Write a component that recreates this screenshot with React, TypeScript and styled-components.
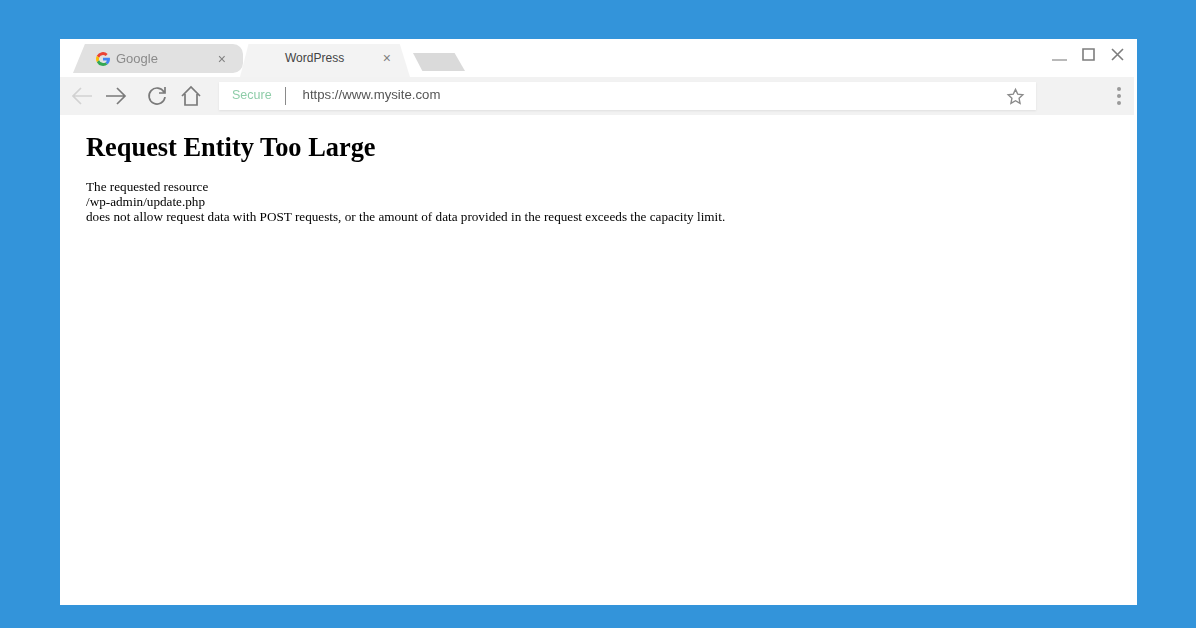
import React from "react";
import styled, { createGlobalStyle } from "styled-components";

const Global = createGlobalStyle`
    html, body {
        margin: 0;
        height: 100%;
    }
    #root {
        height: 100%;
    }
`;

const Page = styled.div`
    box-sizing: border-box;
    height: 628px;
    padding: 39px 59px 23px 60px;
    background-color: #3394da;
`;

const Window = styled.div`
    display: flex;
    flex-direction: column;
    height: 100%;
    background-color: #fff;
`;

const TabStrip = styled.div`
    display: flex;
    align-items: flex-end;
    justify-content: space-between;
    height: 38px;
    padding: 0 12px 0 13px;
    filter: blur(0.7px);
`;

const Tabs = styled.div`
    display: flex;
    align-items: flex-end;
`;

const Tab = styled.div<{ $active?: boolean }>`
    display: flex;
    align-items: center;
    box-sizing: border-box;
    width: 170px;
    height: ${p => (p.$active ? "33px" : "29px")};
    margin-right: -3px;
    margin-bottom: ${p => (p.$active ? "0" : "4px")};
    padding: ${p => (p.$active ? "0 19px 5px 45px" : "0 17px 0 23px")};
    font: ${p => (p.$active ? "12px" : "13px")} "Liberation Sans", sans-serif;
    color: ${p => (p.$active ? "#444" : "#8a8a8a")};
    background-color: ${p => (p.$active ? "#f3f3f3" : "#e1e1e1")};
    border-radius: ${p => (p.$active ? "0" : "0 10px 10px 0")};
    clip-path: ${p =>
        p.$active
            ? "polygon(0 100%, 5% 0, 94% 0, 100% 100%)"
            : "polygon(0 100%, 7% 0, 100% 0, 100% 100%)"};
    z-index: ${p => (p.$active ? 1 : 0)};
`;

const TabFavicon = styled.svg`
    width: 14px;
    height: 14px;
    margin-right: 6px;
    flex: none;
`;

const TabTitle = styled.span`
    flex: 1;
`;

const TabClose = styled.span`
    font-size: 14px;
    line-height: 1;
    color: #808080;
`;

const NewTab = styled.div`
    width: 52px;
    height: 18px;
    margin: 0 0 6px 6px;
    background-color: #dadada;
    clip-path: polygon(0 0, 80% 0, 100% 100%, 18% 100%);
`;

const WindowControls = styled.div`
    display: flex;
    align-items: center;
    gap: 14px;
    height: 100%;
    padding-bottom: 8px;
    box-sizing: border-box;
`;

const ControlIcon = styled.svg<{ $light?: boolean }>`
    width: 15px;
    height: 15px;
    fill: none;
    stroke: ${p => (p.$light ? "#a8a8a8" : "#7d7d7d")};
    stroke-width: 1.6;
`;

const Toolbar = styled.div`
    display: flex;
    align-items: center;
    height: 38px;
    margin-right: 3px;
    padding: 0 12px 0 10px;
    background-color: #f2f2f2;
    filter: blur(0.7px);
`;

const NavButton = styled.svg<{ $dim?: boolean; $gap: number }>`
    width: 24px;
    height: 24px;
    margin-right: ${p => p.$gap}px;
    flex: none;
    fill: none;
    stroke: ${p => (p.$dim ? "#d2d2d2" : "#7a7a7a")};
    stroke-width: 1.7;
`;

const AddressBar = styled.div`
    display: flex;
    align-items: center;
    flex: 1;
    height: 28px;
    margin: 0 80px 0 1px;
    padding: 0 11px 0 13px;
    background-color: #fff;
    font: 13.2px "Liberation Sans", sans-serif;
    box-shadow: 0 1px 2px rgba(0, 0, 0, 0.08);
`;

const Secure = styled.span`
    font-size: 12.5px;
    padding-bottom: 3px;
    color: #8fcda9;
`;

const Divider = styled.span`
    width: 1px;
    height: 18px;
    margin: 0 17px 0 13px;
    background-color: #8a8a8a;
`;

const Url = styled.span`
    flex: 1;
    padding-bottom: 3px;
    color: #555;
`;

const StarIcon = styled.svg`
    width: 19px;
    height: 19px;
    fill: none;
    stroke: #8a8a8a;
    stroke-width: 1.7;
`;

const MenuDots = styled.svg`
    width: 6px;
    height: 20px;
    flex: none;
    fill: #9a9a9a;
`;

const Content = styled.main`
    padding: 16px 26px;
    font-family: "Liberation Serif", "Times New Roman", serif;
    color: #000;
    filter: blur(0.5px);
`;

const Heading = styled.h1`
    margin: 0 0 16px;
    font-size: 26.4px;
    line-height: 32px;
    font-weight: 700;
`;

const Message = styled.p`
    margin: 0;
    font-size: 13.2px;
    line-height: 15px;
`;

export default function App() {
    return (
        <Page>
            <Global />
            <Window>
                <TabStrip>
                    <Tabs>
                        <Tab>
                            <TabFavicon viewBox="0 0 24 24">
                                <path fill="#ea4335" d="M12 5a7 7 0 0 1 4.6 1.7l3.4-3.4A12 12 0 0 0 1.3 6.6l4 3.1A7 7 0 0 1 12 5z" />
                                <path fill="#fbbc05" d="M5 12c0-.8.1-1.600.4-2.300l-4-3.100a12 12 0 0 0 0 10.800l4-3.100A7 7 0 0 1 5 12z" />
                                <path fill="#34a853" d="M12 19a7 7 0 0 1-6.600-4.700l-4 3.100A12 12 0 0 0 20 21l-3.800-3A7 7 0 0 1 12 19z" />
                                <path fill="#4285f4" d="M23.500 10H12v4.500h6.500a5.600 5.600 0 0 1-2.300 3.500l3.800 3c2.400-2.200 4-5.500 4-9 0-.7-.2-1.400-.5-2z" />
                            </TabFavicon>
                            <TabTitle>Google</TabTitle>
                            <TabClose>×</TabClose>
                        </Tab>
                        <Tab $active>
                            <TabTitle>WordPress</TabTitle>
                            <TabClose>×</TabClose>
                        </Tab>
                        <NewTab />
                    </Tabs>
                    <WindowControls>
                        <ControlIcon $light viewBox="0 0 15 15">
                            <path d="M0 13h15" />
                        </ControlIcon>
                        <ControlIcon viewBox="0 0 15 15">
                            <path d="M2 2h11v11H2z" />
                        </ControlIcon>
                        <ControlIcon viewBox="0 0 15 15">
                            <path d="M2 2l11 11M13 2L2 13" />
                        </ControlIcon>
                    </WindowControls>
                </TabStrip>
                <Toolbar>
                    <NavButton $dim $gap={10} viewBox="0 0 24 24">
                        <path d="M22 12H3M11 4l-8 8 8 8" />
                    </NavButton>
                    <NavButton $gap={17} viewBox="0 0 24 24">
                        <path d="M2 12h19M13 4l8 8-8 8" />
                    </NavButton>
                    <NavButton $gap={10} viewBox="0 0 24 24">
                        <path d="M19 8a8 8 0 1 0 1 5M20 3v6h-6" />
                    </NavButton>
                    <NavButton $gap={15} viewBox="0 0 24 24">
                        <path d="M3 12l9-9 9 9M6 10v11h12V10" />
                    </NavButton>
                    <AddressBar>
                        <Secure>Secure</Secure>
                        <Divider />
                        <Url>https://www.mysite.com</Url>
                        <StarIcon viewBox="0 0 24 24">
                            <path d="M12 3l2.800 6 6.500.8-4.800 4.400 1.300 6.500-5.800-3.300-5.800 3.300 1.300-6.500L2.700 9.800 9.200 9z" />
                        </StarIcon>
                    </AddressBar>
                    <MenuDots viewBox="0 0 6 20">
                        <circle cx="3" cy="3" r="2" />
                        <circle cx="3" cy="10" r="2" />
                        <circle cx="3" cy="17" r="2" />
                    </MenuDots>
                </Toolbar>
                <Content>
                    <Heading>Request Entity Too Large</Heading>
                    <Message>
                        The requested resource
                        <br />
                        /wp-admin/update.php
                        <br />
                        does not allow request data with POST requests, or the amount of data provided in the request exceeds the capacity limit.
                    </Message>
                </Content>
            </Window>
        </Page>
    );
}
